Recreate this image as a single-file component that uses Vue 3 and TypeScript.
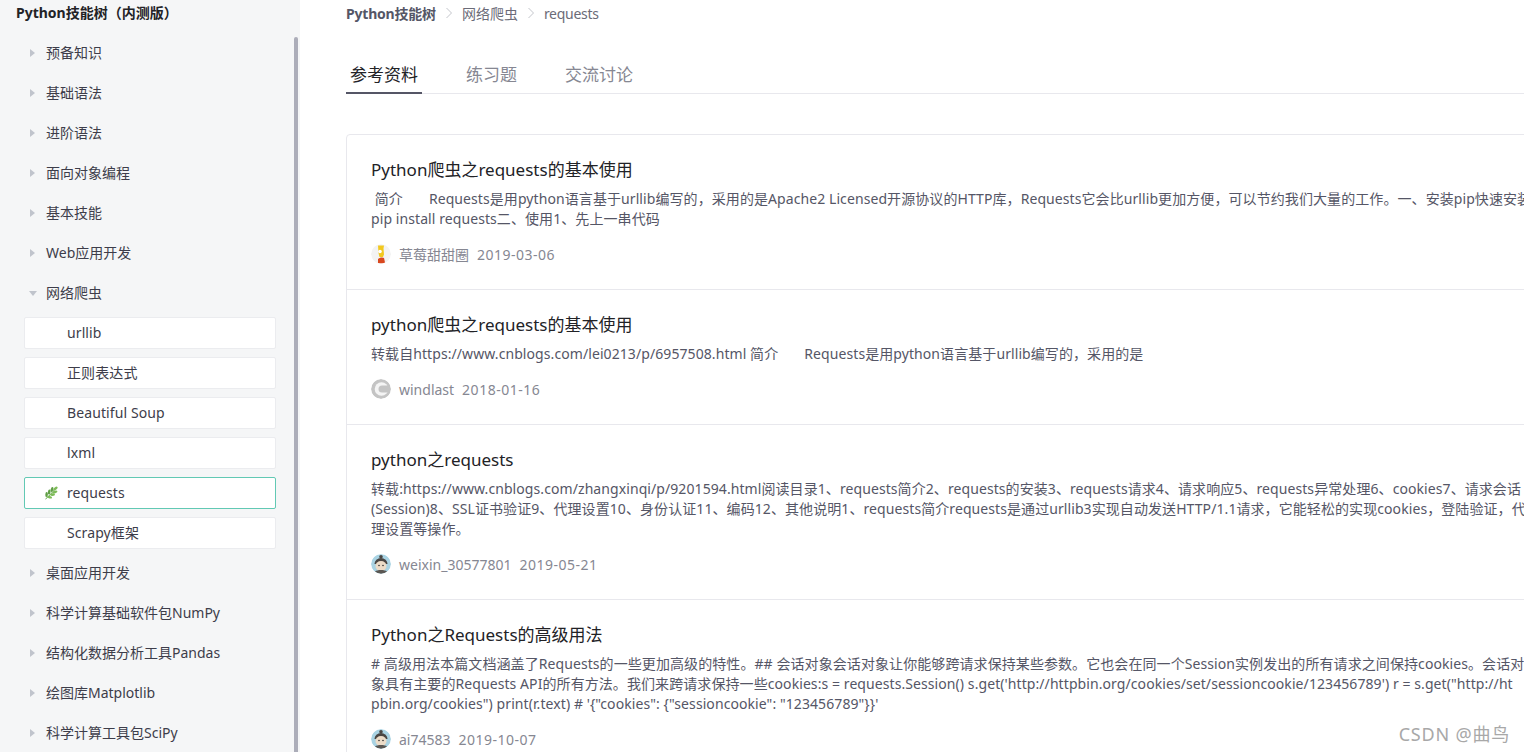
<script setup lang="ts">
interface Article {
  title: string
  lines: string[]
  author: string
  date: string
  avatar: 'bart' | 'ring' | 'monkey'
}

const before = ['预备知识', '基础语法', '进阶语法', '面向对象编程', '基本技能', 'Web应用开发']
const subItems = ['urllib', '正则表达式', 'Beautiful Soup', 'lxml', 'requests', 'Scrapy框架']
const after = ['桌面应用开发', '科学计算基础软件包NumPy', '结构化数据分析工具Pandas', '绘图库Matplotlib', '科学计算工具包SciPy']
const tabs = ['参考资料', '练习题', '交流讨论']

// leaves of the sprout icon: x, y, rotation
const leaves = [
  [11.5, 2.5, -40],
  [8, 3.5, -75],
  [11, 6, -15],
  [5.2, 6, -80],
  [8.5, 8.6, -5],
  [2.6, 8.6, -85],
  [5.6, 11.2, 10],
]

const articles: Article[] = [
  {
    title: 'Python爬虫之requests的基本使用',
    lines: [
      '\u00a0简介\u00a0\u00a0\u00a0\u00a0\u00a0\u00a0\u00a0Requests是用python语言基于urllib编写的，采用的是Apache2 Licensed开源协议的HTTP库，Requests它会比urllib更加方便，可以节约我们大量的工作。一、安装pip快速安装',
      'pip install requests二、使用1、先上一串代码',
    ],
    author: '草莓甜甜圈',
    date: '2019-03-06',
    avatar: 'bart',
  },
  {
    title: 'python爬虫之requests的基本使用',
    lines: ['转载自https://www.cnblogs.com/lei0213/p/6957508.html 简介\u00a0\u00a0\u00a0\u00a0\u00a0\u00a0\u00a0Requests是用python语言基于urllib编写的，采用的是'],
    author: 'windlast',
    date: '2018-01-16',
    avatar: 'ring',
  },
  {
    title: 'python之requests',
    lines: [
      '转载:https://www.cnblogs.com/zhangxinqi/p/9201594.html阅读目录1、requests简介2、requests的安装3、requests请求4、请求响应5、requests异常处理6、cookies7、请求会话',
      '(Session)8、SSL证书验证9、代理设置10、身份认证11、编码12、其他说明1、requests简介requests是通过urllib3实现自动发送HTTP/1.1请求，它能轻松的实现cookies，登陆验证，代',
      '理设置等操作。',
    ],
    author: 'weixin_30577801',
    date: '2019-05-21',
    avatar: 'monkey',
  },
  {
    title: 'Python之Requests的高级用法',
    lines: [
      '# 高级用法本篇文档涵盖了Requests的一些更加高级的特性。## 会话对象会话对象让你能够跨请求保持某些参数。它也会在同一个Session实例发出的所有请求之间保持cookies。会话对',
      '象具有主要的Requests API的所有方法。我们来跨请求保持一些cookies:s = requests.Session() s.get(\'http://httpbin.org/cookies/set/sessioncookie/123456789\') r = s.get("http://ht',
      'pbin.org/cookies") print(r.text) # \'{"cookies": {"sessioncookie": "123456789"}}\'',
    ],
    author: 'ai74583',
    date: '2019-10-07',
    avatar: 'monkey',
  },
]
</script>

<template>
  <div class="page">
    <aside class="sidebar">
      <h1 class="tree-title">Python技能树（内测版）</h1>
      <div class="scroll-thumb"></div>
      <ul class="tree">
        <li v-for="name in before" :key="name" class="node">
          <i class="arrow"></i>{{ name }}
        </li>
        <li class="node">
          <i class="arrow open"></i>网络爬虫
        </li>
        <li
          v-for="name in subItems"
          :key="name"
          :class="['leaf', { active: name === 'requests' }]"
        >
          <svg v-if="name === 'requests'" class="sprout" viewBox="0 0 14 14">
            <path d="M1.5 13C4 11 7.5 7.5 11.5 2.5" fill="none" stroke="#5f9e45" stroke-width="1" />
            <ellipse
              v-for="(l, i) in leaves"
              :key="i"
              :cx="l[0]"
              :cy="l[1]"
              rx="2.5"
              ry="1.3"
              :fill="i % 2 ? '#5f9e45' : '#7dbb58'"
              :transform="`rotate(${l[2]} ${l[0]} ${l[1]})`"
            />
          </svg>
          {{ name }}
        </li>
        <li v-for="name in after" :key="name" class="node">
          <i class="arrow"></i>{{ name }}
        </li>
      </ul>
    </aside>

    <main class="content">
      <nav class="crumbs">
        <b>Python技能树</b>
        <svg class="sep" viewBox="0 0 8 12"><path d="M1.5 1 6.5 6l-5 5" /></svg>
        <span>网络爬虫</span>
        <svg class="sep" viewBox="0 0 8 12"><path d="M1.5 1 6.5 6l-5 5" /></svg>
        <span class="crumb-last">requests</span>
      </nav>

      <div class="tabs">
        <span
          v-for="(tab, i) in tabs"
          :key="tab"
          :class="['tab', { current: i === 0 }]"
        >{{ tab }}</span>
      </div>

      <section class="list">
        <article v-for="item in articles" :key="item.title" class="item">
          <h3>{{ item.title }}</h3>
          <p v-for="line in item.lines" :key="line">{{ line }}</p>
          <div class="meta">
            <svg class="avatar" viewBox="0 0 20 20">
              <template v-if="item.avatar === 'bart'">
                <circle cx="10" cy="10" r="10" fill="#f3f3f3" />
                <path d="M7 1.5h6l-.5 3 .5 6-1 2.5H8.5L7.5 9z" fill="#f2c81e" />
                <circle cx="9" cy="7.5" r="1.8" fill="#fff" />
                <path d="M7 15c1-1.5 5-2 6-1l1 4.5c-2 1-5 1-7 .5z" fill="#d9481f" />
              </template>
              <template v-else-if="item.avatar === 'ring'">
                <circle cx="10" cy="10" r="10" fill="#c4c4c4" />
                <circle cx="10.5" cy="10" r="6.8" fill="#f4f4f4" />
                <path d="M18 6.5h-7a3.500 3.500 0 0 0 0 7h7z" fill="#c4c4c4" />
              </template>
              <template v-else>
                <circle cx="10" cy="10" r="10" fill="#a9d3e3" />
                <circle cx="10" cy="2.8" r="1.8" fill="#4a4643" />
                <path d="M3.5 10a6.500 6 0 0 1 13 0z" fill="#4a4643" />
                <ellipse cx="10" cy="12" rx="5.5" ry="5" fill="#ecdcc8" />
                <path d="M4 17.5c2-2 10-2 12 0a10 10 0 0 1-12 0z" fill="#5b5753" />
                <circle cx="8" cy="11.5" r=".8" fill="#333" />
                <circle cx="12" cy="11.5" r=".8" fill="#333" />
              </template>
            </svg>
            <span class="author">{{ item.author }}</span>
            <span class="date">{{ item.date }}</span>
          </div>
        </article>
      </section>
    </main>

    <div class="watermark">CSDN @曲鸟</div>
  </div>
</template>

<style>
html,
body {
  margin: 0;
  height: 100%;
  overflow: hidden;
  background: #fff;
}
</style>

<style scoped>
.page {
  position: relative;
  display: flex;
  width: 1524px;
  height: 752px;
  overflow: hidden;
  font-family: "Noto Sans", "Noto Sans CJK SC", sans-serif;
  font-size: 14px;
  color: #555666;
}

.sidebar {
  position: relative;
  flex: 0 0 300px;
  background: #f5f6f7;
}

.tree-title {
  margin: 0;
  padding: 3px 0 0 16px;
  height: 23px;
  font-size: 14px;
  line-height: 20px;
  font-weight: 700;
  color: #222226;
}

.scroll-thumb {
  position: absolute;
  top: 37px;
  right: 2px;
  bottom: 0;
  width: 4px;
  border-radius: 2px 2px 0 0;
  background: #acadb9;
}

.tree {
  display: flex;
  flex-direction: column;
  list-style: none;
  margin: 0;
  padding: 7px 24px 0;
}

.node {
  display: flex;
  align-items: center;
  flex: none;
  height: 40px;
  line-height: 40px;
  padding-left: 22px;
  color: #3d3d4a;
  white-space: nowrap;
}

.arrow {
  width: 0;
  height: 0;
  margin-left: -16px;
  margin-right: 11px;
  border-top: 4px solid transparent;
  border-bottom: 4px solid transparent;
  border-left: 5px solid #c0c4cc;
}

.arrow.open {
  margin-left: -17px;
  margin-right: 9px;
  border-top: 5px solid #c0c4cc;
  border-left: 4px solid transparent;
  border-right: 4px solid transparent;
  border-bottom: 0;
}

.leaf {
  position: relative;
  flex: none;
  box-sizing: border-box;
  height: 32px;
  margin: 4px 0;
  padding-left: 42px;
  line-height: 30px;
  letter-spacing: 0.1px;
  background: #fff;
  border: 1px solid #ebecef;
  border-radius: 2px;
  color: #3d3d4a;
}

.leaf.active {
  border-color: #62c9b4;
}

.sprout {
  position: absolute;
  left: 19px;
  top: 8px;
  width: 14px;
  height: 14px;
}

.content {
  flex: 1;
  min-width: 0;
  padding-left: 46px;
}

.crumbs {
  display: flex;
  align-items: center;
  height: 26px;
  font-size: 14px;
  color: #6b6b78;
  white-space: nowrap;
}

.crumbs b {
  letter-spacing: -0.2px;
  color: #555666;
}

.crumb-last {
  letter-spacing: -0.3px;
}

.sep {
  width: 8px;
  height: 12px;
  margin: 0 9px;
  fill: none;
  stroke: #c4c6cc;
  stroke-width: 1;
}

.tabs {
  display: flex;
  height: 68px;
  box-sizing: border-box;
  padding-top: 33px;
  border-bottom: 1px solid #e8e8ed;
  margin-right: -46px;
}

.tab {
  box-sizing: border-box;
  height: 35px;
  margin-right: 40px;
  padding: 0 4px;
  font-size: 17px;
  line-height: 31px;
  color: #868792;
}

.tab.current {
  color: #222226;
  border-bottom: 2px solid #555666;
}

.list {
  width: 1300px;
  margin-top: 40px;
  border: 1px solid #e8e8ed;
  border-radius: 4px;
}

.item {
  padding: 24px 24px 25px;
  border-bottom: 1px solid #e8e8ed;
}

.item h3 {
  margin: 0 0 8px;
  font-size: 17px;
  line-height: 22px;
  font-weight: 400;
  color: #222226;
}

.item p {
  margin: 0;
  font-size: 14px;
  line-height: 20px;
  letter-spacing: 0.08px;
  color: #555666;
  white-space: nowrap;
}

.meta {
  display: flex;
  align-items: center;
  height: 20px;
  margin-top: 15px;
  font-size: 14px;
  color: #868792;
  white-space: nowrap;
}

.avatar {
  width: 20px;
  height: 20px;
  margin-right: 8px;
  border-radius: 50%;
}

.author {
  margin-right: 8px;
}

.date {
  letter-spacing: 0.5px;
}

.watermark {
  position: absolute;
  right: 14px;
  bottom: 6px;
  font-size: 18px;
  line-height: 24px;
  letter-spacing: 0.8px;
  color: #a8a8a8;
}
</style>
